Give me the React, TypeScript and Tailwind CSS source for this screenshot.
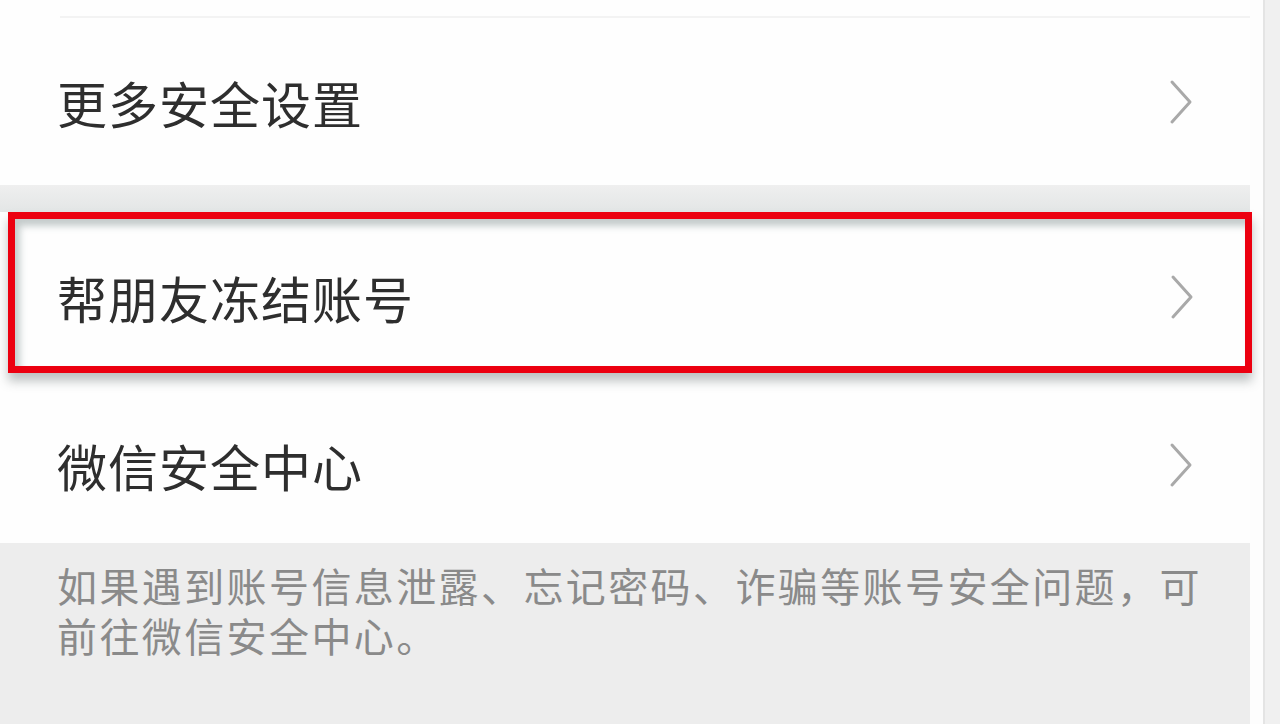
import React from 'react';

const font = { fontFamily: '"Noto Sans CJK SC", "Noto Sans", sans-serif' };

const Chevron: React.FC = () => (
  <svg width="26" height="46" viewBox="0 0 26 46" fill="none" className="shrink-0">
    <path d="M4 3 L22 23 L4 43" stroke="#a9a9a9" strokeWidth="3" strokeLinecap="round" strokeLinejoin="round" />
  </svg>
);

interface RowProps {
  label: string;
  className?: string;
}

const Row: React.FC<RowProps> = ({ label, className = '' }) => (
  <div className={`flex items-center justify-between bg-[#fefefe] pl-[57px] pr-[56px] ${className}`}>
    <span className="text-[50px] leading-none tracking-[1px] text-[#2e2e2e]">{label}</span>
    <Chevron />
  </div>
);

export default function App() {
  return (
    <div className="flex h-[724px] w-[1280px] overflow-hidden bg-[#efefef]" style={font}>
      {/* main list */}
      <div className="flex w-[1250px] flex-col bg-[#fefefe]">
        {/* tail of the previous row */}
        <div className="h-[16px] bg-[#fefefe]" />
        <div className="ml-[60px] h-[2px] bg-[#f3f3f3]" />

        <Row label="更多安全设置" className="h-[167px]" />

        {/* group gap */}
        <div className="h-[27px] bg-gradient-to-b from-[#efefef] to-[#e3e6e6]" />

        {/* highlighted row */}
        <div className="relative z-10 ml-[8px] mr-[-2px] border-[7px] border-[#ec0010] bg-[#fefefe] shadow-[0_8px_10px_rgba(70,80,80,0.35)]">
          <div className="flex h-[147px] items-center justify-between pl-[42px] pr-[50px] pt-[8px] shadow-[inset_5px_7px_7px_rgba(90,110,110,0.35)]">
            <span className="text-[50px] leading-none tracking-[1px] text-[#2e2e2e]">帮朋友冻结账号</span>
            <Chevron />
          </div>
        </div>

        <Row label="微信安全中心" className="h-[170px] pt-[14px]" />

        {/* footer note */}
        <div className="flex-1 bg-[#ededed] pl-[57px] pr-[30px] pt-[17px] text-[40px] tracking-[2.4px] text-[#8a8a8a]">
          <div className="h-[50px] leading-[50px] whitespace-nowrap">如果遇到账号信息泄露、忘记密码、诈骗等账号安全问题，可</div>
          <div className="h-[50px] leading-[50px] whitespace-nowrap">前往微信安全中心。</div>
        </div>
      </div>

      {/* right edge of the screen */}
      <div className="w-[13px] bg-[#fdfdfd]" />
      <div className="w-[2px] bg-[#e4e4e4]" />
      <div className="flex-1 bg-[#f0f0f0]" />
    </div>
  );
}
